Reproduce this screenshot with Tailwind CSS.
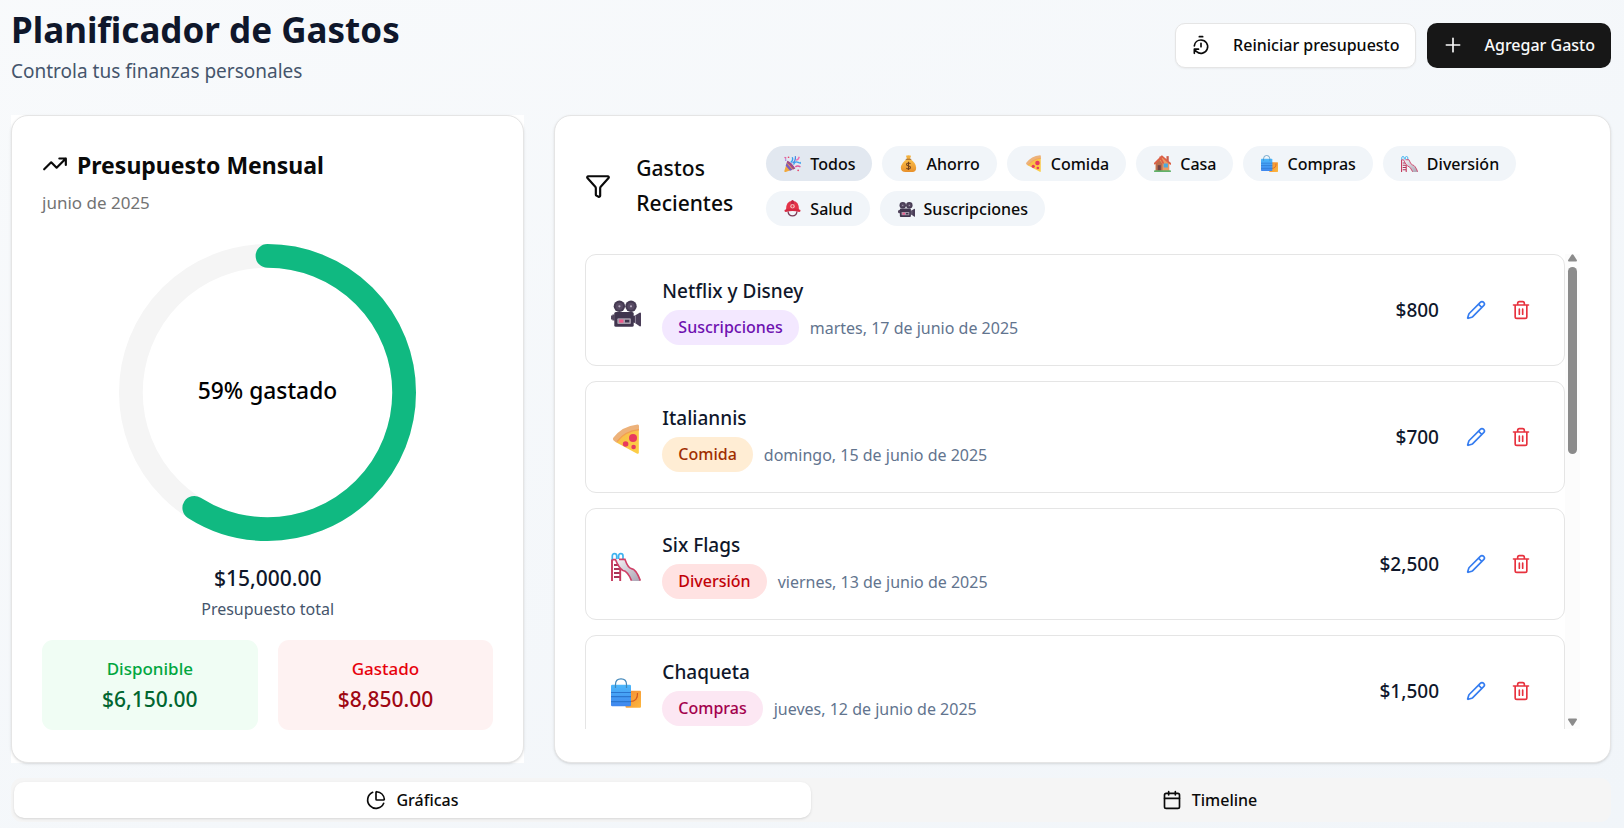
<!DOCTYPE html>
<html lang="es">
<head>
<meta charset="utf-8">
<meta name="viewport" content="width=device-width, initial-scale=1">
<title>Planificador de Gastos</title>
<script src="https://cdn.jsdelivr.net/npm/@tailwindcss/browser@4"></script>
</head>
<body class="min-h-screen bg-linear-to-br from-slate-50 to-slate-100 font-['Noto_Sans',sans-serif] text-base text-neutral-950">

<svg class="absolute size-0" aria-hidden="true">
  <defs>
    <linearGradient id="g-metal" x1="0" y1="0" x2="1" y2="1"><stop offset="0" stop-color="#f4f1f5"/><stop offset="1" stop-color="#a9a3b3"/></linearGradient>
    <linearGradient id="g-blue" x1="0" y1="0" x2="0" y2="1"><stop offset="0" stop-color="#4db8fb"/><stop offset="1" stop-color="#3f86ee"/></linearGradient>
    <linearGradient id="g-orange" x1="0" y1="0" x2="1" y2="1"><stop offset="0" stop-color="#f28a33"/><stop offset="1" stop-color="#fdb83f"/></linearGradient>
    <linearGradient id="g-cheese" x1="0" y1="0" x2="1" y2="1"><stop offset="0" stop-color="#f7bb4a"/><stop offset="1" stop-color="#fdcf45"/></linearGradient>
    <linearGradient id="g-gold" x1="0" y1="0" x2="0" y2="1"><stop offset="0" stop-color="#fbc04a"/><stop offset="1" stop-color="#e8902b"/></linearGradient>
  </defs>
  <symbol id="e-camera" viewBox="0 0 30 30">
    <circle cx="8.4" cy="9.3" r="5.7" fill="#453a52"/><circle cx="20" cy="9.3" r="5.7" fill="#453a52"/>
    <circle cx="8.4" cy="9.3" r="3.6" fill="#574a63"/><circle cx="20" cy="9.3" r="3.6" fill="#574a63"/>
    <circle cx="8.4" cy="9.3" r="1.1" fill="#b5a9bd"/><circle cx="20" cy="9.3" r="1.1" fill="#b5a9bd"/>
    <path d="M0 18.5h1.4v-1h2.3v6H1.4v-1H0z" fill="#54485f"/>
    <path d="M22 19l2-.5L29 15.500q1 0 1 1v12q0 1-1 1L24 26l-2-.5z" fill="#4a3d58"/>
    <path d="M24.500 18.300v7.800" stroke="#8a8095" stroke-width="1"/>
    <rect x="3.300" y="15" width="19.400" height="14.800" rx="1.600" fill="#40354e"/>
    <rect x="6.300" y="21.200" width="13.600" height="5.800" rx="1" fill="#a79dac"/>
    <rect x="8" y="22.500" width="4.400" height="3.200" fill="#ef5a8c"/><rect x="14" y="22.800" width="4.300" height="2.600" fill="#40354e"/>
  </symbol>
  <symbol id="e-pizza" viewBox="0 0 30 30">
    <path d="M5 16.500Q13 7 27.800 5v23.500q0 1.600-1.600 1.200L4.500 18z" fill="url(#g-cheese)"/>
    <path d="M26.500.4Q28 .2 28 2v4.200Q14 7.500 6.500 17.800 5.500 18.600 4.200 17.800L2.400 16.200Q1.400 15 2.300 13.800 11 2 26.500.4z" fill="#edb27a"/>
    <path d="M28 5.600Q14 7 6 17.600" fill="none" stroke="#f3a04e" stroke-width="1.200"/>
    <circle cx="22" cy="14" r="4" fill="#e83a5f"/><circle cx="14.600" cy="20" r="2.800" fill="#e83a5f"/><circle cx="22.600" cy="23" r="2.300" fill="#e83a5f"/>
  </symbol>
  <symbol id="e-slide" viewBox="0 0 30 30">
    <path d="M1.300 9V5q0-2.300 2.200-2.300T5.700 5v3M7.600 8V5q0-2.300 2.200-2.300T12 5v4" fill="none" stroke="#3fb3ef" stroke-width="1.700"/>
    <path d="M3 14h6M3 18h6M3 22h6M3 26h6" stroke="#a93457" stroke-width="1.900"/>
    <path d="M1 8.500V30M9.200 17v13" stroke="#c6395d" stroke-width="1.900"/>
    <path d="M5 8.400h9Q17.500 17 20.500 17.600 25 18 29.500 30h-9Q17 20.500 13 20 9 18.500 5 8.400z" fill="url(#g-metal)"/>
    <path d="M1.500 8.600H4.500Q8 17.500 12 19.500 16.500 20 20.500 29.600M8 8.400h6Q17 17 20.500 17.600 25 18 29.400 29.600" fill="none" stroke="#cf3f66" stroke-width="1.600"/>
  </symbol>
  <symbol id="e-bags" viewBox="0 0 30 30">
    <rect x="14.500" y="12.800" width="15.500" height="17" rx="1" fill="url(#g-orange)"/>
    <path d="M26.500 15q.5 8.500-7.500 8.500" fill="none" stroke="#d3591f" stroke-width="1.200"/>
    <rect x="0" y="6.800" width="20" height="21.500" rx="1.200" fill="url(#g-blue)"/>
    <path d="M0 14.500h20M0 18.600h20M0 23.600h20" stroke="#2b76cf" stroke-width="1.100"/>
    <path d="M4.500 10V6.500Q4.500.8 10 .8t5.500 5.700V10" fill="none" stroke="#4187ba" stroke-width="1.200"/>
  </symbol>
  <symbol id="e-party" viewBox="0 0 30 30">
    <path d="M6 10 20 24 3 30Q-.5 30.500 1 27z" fill="#f2a93c"/>
    <path d="M4.500 14 15 26l-4.500 1.600L3 19z" fill="#7c5ac0"/><path d="M6 10q7 2 14 14l-4 1.500Q11 17 4.700 13.500z" fill="#a04a8c"/>
    <path d="M12 13q5-4 2.500-9M17 17q2-7 8-4t5-1" fill="none" stroke="#3ba0ee" stroke-width="2.400"/>
    <path d="M15 14q6-3 5-12" fill="none" stroke="#3b7fe0" stroke-width="2"/>
    <path d="M20 21q4-3 9 0M1 4l3 2" fill="none" stroke="#e0559b" stroke-width="2.400"/>
    <path d="M21 9q4 0 6-6" fill="none" stroke="#f06fb0" stroke-width="2.400"/>
    <circle cx="8" cy="4" r="1.500" fill="#e8476b"/><circle cx="25" cy="27" r="1.600" fill="#e8476b"/><circle cx="3" cy="9" r="1.400" fill="#9b6be0"/>
  </symbol>
  <symbol id="e-money" viewBox="0 0 30 30">
    <path d="M10.500 1.500Q15-1 19.500 1.500L17.500 7h-5z" fill="#f3b03f"/>
    <path d="M12 7h6q10.500 7 10.500 15.500T20 30H10Q1.500 30 1.500 22.500T12 7z" fill="url(#g-gold)"/>
    <path d="M11 7.500h8" stroke="#a0652a" stroke-width="2.200" stroke-linecap="round"/>
    <path d="M18.500 15.500Q17.500 14 15 14q-3.500 0-3.500 2.500T15 19.300t3.500 2.700-3.500 2.700q-2.700 0-3.700-1.700M15 12v14.500" fill="none" stroke="#71421c" stroke-width="1.800"/>
  </symbol>
  <symbol id="e-house" viewBox="0 0 30 30">
    <path d="M3 13 14 3l13 11v15H3z" fill="#eb9b62"/><path d="M3 14 9 8l6 8v13H3z" fill="#bd6d4c"/>
    <rect x="22" y="2" width="4" height="9" fill="#c95d4b"/>
    <path d="M14 2.500 29 15.500M14 2.500 1.500 15M11 4l5 10" fill="none" stroke="#dc6047" stroke-width="3.200" stroke-linecap="round"/>
    <rect x="17" y="15" width="7.500" height="7" fill="#4aa9df"/><rect x="6.500" y="18" width="5.500" height="10" fill="#704346"/>
    <rect x="0" y="27" width="30" height="3" rx="1.500" fill="#61b26a"/>
  </symbol>
  <symbol id="e-helmet" viewBox="0 0 30 30">
    <path d="M7 20q1 8 8 8t8-8" fill="none" stroke="#7c3a55" stroke-width="2.200"/>
    <path d="M3.500 18Q3 2.500 15 1.500 27 2.500 26.500 18z" fill="#e43348"/>
    <path d="M15 0q2.500 0 2.500 3v14h-5V3Q12.500 0 15 0z" fill="#c22743"/>
    <path d="M1.500 17Q15 13 28.500 17q2 3.500-1.500 4-12-3-24 0-3.500-.5-1.500-4z" fill="#d62a42"/>
    <circle cx="15" cy="11" r="4" fill="#f4b7b4"/><path d="M15 8.500v5M12.500 11h5" stroke="#e43348" stroke-width="1.400"/>
  </symbol>
  <symbol id="i-pencil" viewBox="0 0 24 24">
    <path d="M21.174 6.812a1 1 0 0 0-3.986-3.987L3.842 16.174a2 2 0 0 0-.5.830l-1.321 4.352a.5.5 0 0 0 .623.622l4.353-1.320a2 2 0 0 0 .830-.497zM15 5l4 4"/>
  </symbol>
  <symbol id="i-trash" viewBox="0 0 24 24">
    <path d="M3 6h18M19 6v14c0 1-1 2-2 2H7c-1 0-2-1-2-2V6M8 6V4c0-1 1-2 2-2h4c1 0 2 1 2 2v2M10 11v6M14 11v6"/>
  </symbol>
</svg>

<main class="pt-[5px] pr-[13px] pb-1 pl-[11px]">
  <header class="flex items-center justify-between">
    <div>
      <h1 class="text-[35px] leading-[50px] font-bold text-slate-900">Planificador de Gastos</h1>
      <p class="mt-[2px] text-[19px] leading-7 text-slate-600">Controla tus finanzas personales</p>
    </div>
    <div class="flex gap-[11px]">
      <button type="button" class="flex h-[45px] items-center gap-[22px] rounded-[10px] border border-neutral-200 bg-white px-[15px] font-medium shadow-xs">
        <svg class="size-5 fill-none stroke-current stroke-2" viewBox="0 0 24 24" stroke-linecap="round" stroke-linejoin="round" aria-hidden="true"><path d="M10 2h4M12 14v-4M4 13a8 8 0 0 1 8-7 8 8 0 1 1-5.300 14L4 17.600M9 17H4v5"/></svg>
        Reiniciar presupuesto
      </button>
      <button type="button" class="flex h-[45px] items-center gap-[22px] rounded-[10px] bg-neutral-900 px-4 font-medium text-neutral-50">
        <svg class="size-5 fill-none stroke-current stroke-2" viewBox="0 0 24 24" stroke-linecap="round" aria-hidden="true"><path d="M4 12h16M12 4v16"/></svg>
        Agregar Gasto
      </button>
    </div>
  </header>

  <div class="mt-[30px] grid grid-cols-3 gap-[30px]">
    <div class="bg-white">
      <section class="flex h-full flex-col rounded-[17px] border border-neutral-200 bg-white p-[30px] shadow-sm">
        <h2 class="flex items-center gap-[9px] text-[23px] leading-[38px] font-bold">
          <svg class="size-[26px] fill-none stroke-current stroke-2" viewBox="0 0 24 24" stroke-linecap="round" stroke-linejoin="round" aria-hidden="true"><path d="m22 6-8.500 8.500-5-5L2 16M16 6h6v6"/></svg>
          Presupuesto Mensual
        </h2>
        <p class="mt-[6px] text-[17px] leading-[26px] text-neutral-500">junio de 2025</p>
        <svg class="mt-7 size-[297px] self-center" viewBox="0 0 300 300" role="img" aria-label="59% gastado">
          <circle cx="150" cy="150" r="138" fill="none" stroke="#f5f5f5" stroke-width="24"/>
          <circle cx="150" cy="150" r="138" fill="none" stroke="#10b981" stroke-width="24" stroke-linecap="round" pathLength="100" stroke-dasharray="59 100" transform="rotate(-90 150 150)"/>
          <text x="150" y="157" text-anchor="middle" class="fill-black text-[23px] font-medium">59% gastado</text>
        </svg>
        <p class="mt-[22px] text-center text-[21px] leading-[30px] font-medium text-slate-900">$15,000.00</p>
        <p class="mt-1 text-center leading-6 text-slate-600">Presupuesto total</p>
        <div class="mt-[19px] grid grid-cols-2 gap-5 text-center">
          <div class="rounded-[11px] bg-green-50 p-4">
            <p class="text-[17px] leading-[26px] font-medium text-green-600">Disponible</p>
            <p class="mt-0.5 text-[21px] leading-[30px] font-medium text-green-800">$6,150.00</p>
          </div>
          <div class="rounded-[11px] bg-red-50 p-4">
            <p class="text-[17px] leading-[26px] font-medium text-red-600">Gastado</p>
            <p class="mt-0.5 text-[21px] leading-[30px] font-medium text-red-800">$8,850.00</p>
          </div>
        </div>
      </section>
    </div>

    <section class="col-span-2 rounded-[17px] border border-neutral-200 bg-white px-[30px] pt-[30px] pb-[33px] shadow-sm">
      <div class="flex items-center">
        <svg class="mr-[25px] size-[26px] shrink-0 fill-none stroke-current stroke-2" viewBox="0 0 24 24" stroke-linecap="round" stroke-linejoin="round" aria-hidden="true"><path d="M10 20a1 1 0 0 0 .553.895l2 1A1 1 0 0 0 14 21v-7a2 2 0 0 1 .517-1.341L21.740 4.670A1 1 0 0 0 21 3H3a1 1 0 0 0-.742 1.670l7.225 7.989A2 2 0 0 1 10 14z"/></svg>
        <h2 class="w-[130px] shrink-0 text-[21px] leading-[35px] font-medium">Gastos<br>Recientes</h2>
        <div class="flex flex-wrap gap-[10px] font-medium">
          <button type="button" class="flex h-[35px] items-center gap-[9px] rounded-full bg-slate-200 pr-[17px] pl-[18px]"><svg class="size-[17px]" aria-hidden="true"><use href="#e-party"/></svg>Todos</button>
          <button type="button" class="flex h-[35px] items-center gap-[9px] rounded-full bg-slate-100 pr-[17px] pl-[18px]"><svg class="size-[17px]" aria-hidden="true"><use href="#e-money"/></svg>Ahorro</button>
          <button type="button" class="flex h-[35px] items-center gap-[9px] rounded-full bg-slate-100 pr-[17px] pl-[18px]"><svg class="size-[17px]" aria-hidden="true"><use href="#e-pizza"/></svg>Comida</button>
          <button type="button" class="flex h-[35px] items-center gap-[9px] rounded-full bg-slate-100 pr-[17px] pl-[18px]"><svg class="size-[17px]" aria-hidden="true"><use href="#e-house"/></svg>Casa</button>
          <button type="button" class="flex h-[35px] items-center gap-[9px] rounded-full bg-slate-100 pr-[17px] pl-[18px]"><svg class="size-[17px]" aria-hidden="true"><use href="#e-bags"/></svg>Compras</button>
          <button type="button" class="flex h-[35px] items-center gap-[9px] rounded-full bg-slate-100 pr-[17px] pl-[18px]"><svg class="size-[17px]" aria-hidden="true"><use href="#e-slide"/></svg>Diversión</button>
          <button type="button" class="flex h-[35px] items-center gap-[9px] rounded-full bg-slate-100 pr-[17px] pl-[18px]"><svg class="size-[17px]" aria-hidden="true"><use href="#e-helmet"/></svg>Salud</button>
          <button type="button" class="flex h-[35px] items-center gap-[9px] rounded-full bg-slate-100 pr-[17px] pl-[18px]"><svg class="size-[17px]" aria-hidden="true"><use href="#e-camera"/></svg>Suscripciones</button>
        </div>
      </div>

      <div class="mt-7 flex h-[475px] overflow-hidden">
        <ul class="flex flex-1 flex-col gap-[15px]">
          <li class="flex shrink-0 items-center rounded-[11px] border border-neutral-200 py-5 pr-[26px] pl-[25px]">
            <svg class="mt-[3px] size-[30px]" aria-hidden="true"><use href="#e-camera"/></svg>
            <div class="ml-[21px] flex-1">
              <h3 class="text-[19px] leading-8 font-medium text-slate-900">Netflix y Disney</h3>
              <div class="mt-[3px] flex items-center gap-[11px]"><span class="rounded-full bg-purple-100 px-4 leading-[35px] font-medium text-purple-800">Suscripciones</span><span class="text-slate-500">martes, 17 de junio de 2025</span></div>
            </div>
            <span class="mr-[19px] text-[19px] font-medium text-slate-900">$800</span>
            <button type="button" aria-label="Editar" class="mr-[10px] grid size-[35px] place-items-center text-[#347cf0]"><svg class="size-5 fill-none stroke-current stroke-2" stroke-linecap="round" stroke-linejoin="round"><use href="#i-pencil"/></svg></button>
            <button type="button" aria-label="Eliminar" class="grid size-[35px] place-items-center text-[#e7323e]"><svg class="size-5 fill-none stroke-current stroke-2" stroke-linecap="round" stroke-linejoin="round"><use href="#i-trash"/></svg></button>
          </li>
          <li class="flex shrink-0 items-center rounded-[11px] border border-neutral-200 py-5 pr-[26px] pl-[25px]">
            <svg class="mt-[3px] size-[30px]" aria-hidden="true"><use href="#e-pizza"/></svg>
            <div class="ml-[21px] flex-1">
              <h3 class="text-[19px] leading-8 font-medium text-slate-900">Italiannis</h3>
              <div class="mt-[3px] flex items-center gap-[11px]"><span class="rounded-full bg-orange-100 px-4 leading-[35px] font-medium text-orange-800">Comida</span><span class="text-slate-500">domingo, 15 de junio de 2025</span></div>
            </div>
            <span class="mr-[19px] text-[19px] font-medium text-slate-900">$700</span>
            <button type="button" aria-label="Editar" class="mr-[10px] grid size-[35px] place-items-center text-[#347cf0]"><svg class="size-5 fill-none stroke-current stroke-2" stroke-linecap="round" stroke-linejoin="round"><use href="#i-pencil"/></svg></button>
            <button type="button" aria-label="Eliminar" class="grid size-[35px] place-items-center text-[#e7323e]"><svg class="size-5 fill-none stroke-current stroke-2" stroke-linecap="round" stroke-linejoin="round"><use href="#i-trash"/></svg></button>
          </li>
          <li class="flex shrink-0 items-center rounded-[11px] border border-neutral-200 py-5 pr-[26px] pl-[25px]">
            <svg class="mt-[3px] size-[30px]" aria-hidden="true"><use href="#e-slide"/></svg>
            <div class="ml-[21px] flex-1">
              <h3 class="text-[19px] leading-8 font-medium text-slate-900">Six Flags</h3>
              <div class="mt-[3px] flex items-center gap-[11px]"><span class="rounded-full bg-red-100 px-4 leading-[35px] font-medium text-red-700">Diversión</span><span class="text-slate-500">viernes, 13 de junio de 2025</span></div>
            </div>
            <span class="mr-[19px] text-[19px] font-medium text-slate-900">$2,500</span>
            <button type="button" aria-label="Editar" class="mr-[10px] grid size-[35px] place-items-center text-[#347cf0]"><svg class="size-5 fill-none stroke-current stroke-2" stroke-linecap="round" stroke-linejoin="round"><use href="#i-pencil"/></svg></button>
            <button type="button" aria-label="Eliminar" class="grid size-[35px] place-items-center text-[#e7323e]"><svg class="size-5 fill-none stroke-current stroke-2" stroke-linecap="round" stroke-linejoin="round"><use href="#i-trash"/></svg></button>
          </li>
          <li class="flex shrink-0 items-center rounded-[11px] border border-neutral-200 py-5 pr-[26px] pl-[25px]">
            <svg class="mt-[3px] size-[30px]" aria-hidden="true"><use href="#e-bags"/></svg>
            <div class="ml-[21px] flex-1">
              <h3 class="text-[19px] leading-8 font-medium text-slate-900">Chaqueta</h3>
              <div class="mt-[3px] flex items-center gap-[11px]"><span class="rounded-full bg-pink-100 px-4 leading-[35px] font-medium text-pink-800">Compras</span><span class="text-slate-500">jueves, 12 de junio de 2025</span></div>
            </div>
            <span class="mr-[19px] text-[19px] font-medium text-slate-900">$1,500</span>
            <button type="button" aria-label="Editar" class="mr-[10px] grid size-[35px] place-items-center text-[#347cf0]"><svg class="size-5 fill-none stroke-current stroke-2" stroke-linecap="round" stroke-linejoin="round"><use href="#i-pencil"/></svg></button>
            <button type="button" aria-label="Eliminar" class="grid size-[35px] place-items-center text-[#e7323e]"><svg class="size-5 fill-none stroke-current stroke-2" stroke-linecap="round" stroke-linejoin="round"><use href="#i-trash"/></svg></button>
          </li>
        </ul>
        <div class="flex w-[15px] flex-col items-center bg-[#fcfcfc] pb-[3px] text-[#8b8b8b]" aria-hidden="true">
          <svg class="h-2 w-[9px] fill-current" viewBox="0 0 9 8"><path d="M3.600.800q.9-1.200 1.800 0L8.800 6q.6 1.500-.8 1.500H1Q-.4 7.500.2 6z"/></svg>
          <div class="mt-[5px] h-[187px] w-[9px] rounded-full bg-current"></div>
          <svg class="mt-auto h-2 w-[9px] fill-current" viewBox="0 0 9 8"><path d="M3.600 7.200q.9 1.200 1.800 0L8.800 2q.6-1.500-.8-1.500H1Q-.4.500.2 2z"/></svg>
        </div>
      </div>
    </section>
  </div>

  <div role="tablist" class="mt-[15px] grid grid-cols-2 rounded-[11px] bg-neutral-100 px-[3px] py-1 font-medium">
    <button type="button" role="tab" aria-selected="true" class="flex h-9 items-center justify-center gap-[10px] rounded-[10px] bg-white shadow-sm">
      <svg class="size-5 fill-none stroke-current stroke-2" viewBox="0 0 24 24" stroke-linecap="round" stroke-linejoin="round" aria-hidden="true"><path d="M21 12c.552 0 1.005-.449.950-.998a10 10 0 0 0-8.953-8.951c-.550-.055-.998.398-.998.950v8a1 1 0 0 0 1 1zM21.210 15.890A10 10 0 1 1 8 2.830"/></svg>
      Gráficas
    </button>
    <button type="button" role="tab" aria-selected="false" class="flex h-9 items-center justify-center gap-[10px] rounded-[10px]">
      <svg class="size-5 fill-none stroke-current stroke-2" viewBox="0 0 24 24" stroke-linecap="round" stroke-linejoin="round" aria-hidden="true"><path d="M8 2v4M16 2v4M3 10h18"/><rect x="3" y="4" width="18" height="18" rx="2"/></svg>
      Timeline
    </button>
  </div>
</main>
</body>
</html>
